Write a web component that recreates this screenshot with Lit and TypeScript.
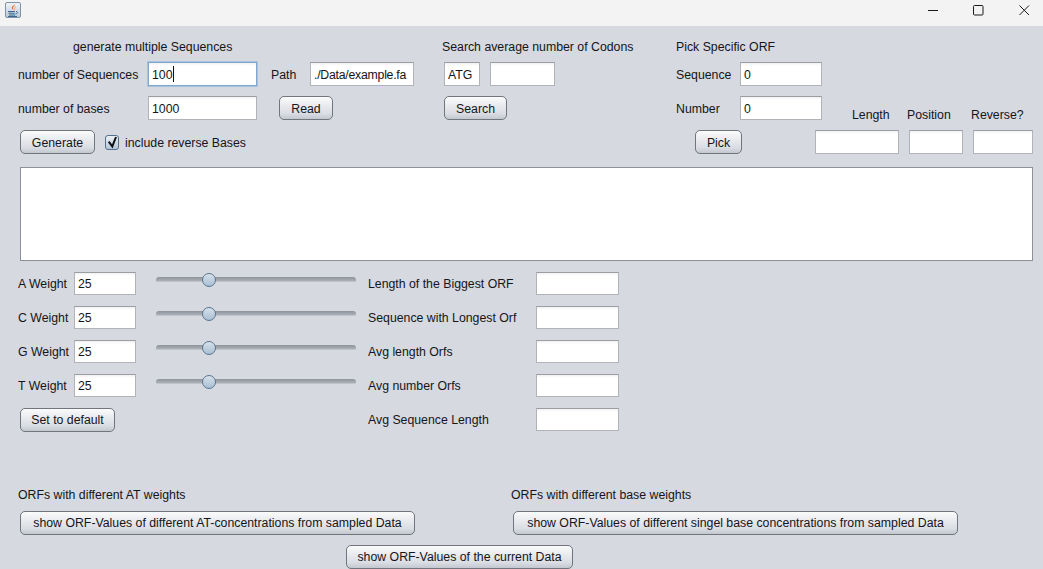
import { LitElement, html, css } from 'lit';
import { customElement, state } from 'lit/decorators.js';

const WEIGHT_MAX = 100;

@customElement('app-root')
export class AppRoot extends LitElement {
  static override styles = css`
    :host {
      display: block;
      height: 100vh;
      overflow: hidden;
      background: #d6d9df;
      color: #15151a;
      font-family: 'Liberation Sans', Arial, sans-serif;
      font-size: 12.3px;
      line-height: 16px;
    }

    * {
      box-sizing: border-box;
    }

    .titlebar {
      display: flex;
      align-items: center;
      height: 26px;
      background: #f3f3f3;
      padding-left: 5px;
    }

    .app-icon {
      display: block;
      margin-bottom: 6px;
    }

    .window-controls {
      display: flex;
      margin-left: auto;
    }

    .window-controls svg {
      display: block;
      width: 46px;
      height: 20px;
      margin-bottom: 6px;
    }

    .top {
      display: flex;
      padding-left: 18px;
    }

    .group {
      display: flex;
      flex-direction: column;
      gap: 10px;
    }

    .group.left {
      width: 396px;
    }

    .group.codons {
      width: 234px;
      margin-left: 28px;
    }

    .group-title {
      height: 36px;
      padding-top: 13px;
      margin-bottom: -10px;
    }

    .group.left .group-title {
      padding-left: 55px;
    }

    .row {
      display: flex;
      align-items: center;
      height: 24px;
    }

    .row label,
    .reverse .label {
      padding-top: 1px;
    }

    label,
    .label {
      display: block;
      flex: none;
    }

    input {
      flex: none;
      display: block;
      height: 24px;
      padding: 1px 3px 0;
      border: 1px solid #b1b3b8;
      border-top-color: #9b9da2;
      background: linear-gradient(#f1f1f2, #fff 3px);
      color: #15151a;
      font: inherit;
      outline: none;
      border-radius: 0;
    }

    .field-wrap {
      position: relative;
      flex: none;
    }

    .field-wrap input {
      border: 1px solid #7fa7d1;
      box-shadow: 0 0 0 1px #a9c3de;
    }

    .caret {
      position: absolute;
      left: 25px;
      top: 4px;
      width: 1px;
      height: 16px;
      background: #111;
    }

    button {
      flex: none;
      height: 24px;
      padding: 1px 0 0;
      border: 1px solid #71757e;
      border-radius: 5px;
      background: linear-gradient(#fbfbfc 0%, #e6e8ec 45%, #dadde3 75%, #c3c7cf 100%);
      color: #15151a;
      font: inherit;
      text-align: center;
    }

    .w-num-label { width: 130px; }
    .w-num { width: 109px; }
    .path-label { width: 39px; margin-left: 14px; }
    .w-path { width: 104px; letter-spacing: -0.25px; }
    .read { width: 54px; margin-left: 22px; }
    .generate { width: 75px; margin-left: 2px; }

    .reverse {
      display: flex;
      align-items: center;
      margin-left: 10px;
      gap: 6px;
    }

    .reverse svg {
      display: block;
    }

    .codons .row {
      padding-left: 2px;
    }

    .w-codon { width: 36px; }
    .w-count { width: 65px; margin-left: 10px; }
    .search { width: 63px; }

    .orf-label { width: 64px; }
    .w-orf { width: 82px; }
    .result-title {
      align-self: flex-end;
      margin-bottom: -3px;
    }
    .t-length { margin-left: 30px; width: 55px; }
    .t-position { width: 64px; }
    .pick { width: 47px; margin-left: 19px; }
    .w-length { width: 84px; margin-left: 73px; }
    .w-position { width: 54px; margin-left: 10px; }
    .w-reverse { width: 60px; margin-left: 10px; }

    .output {
      height: 94px;
      margin: 13px 10px 0 20px;
      border: 1px solid #8d9097;
      background: #fff;
    }

    .weights {
      display: flex;
      flex-direction: column;
      gap: 11px;
      margin-top: 11px;
      padding-left: 18px;
    }

    .weight-row {
      display: flex;
      align-items: center;
      height: 23px;
    }

    .weight-row input {
      height: 23px;
    }

    .w-weight-label { width: 56px; }
    .w-weight { width: 62px; }
    .slider {
      position: relative;
      flex: none;
      width: 200px;
      height: 6px;
      margin: -8px 12px 0 20px;
      border-radius: 3px;
      background: linear-gradient(#8e929a, #a9adb5 60%, #e3e5e9);
    }

    .thumb {
      position: absolute;
      top: -4px;
      width: 14px;
      height: 14px;
      margin-left: -7px;
      border: 1px solid #5a7590;
      border-radius: 50%;
      background: linear-gradient(#d7e1ea, #a9bfd3);
    }

    .stat-label { width: 168px; }
    .w-stat { width: 83px; }

    .default-btn {
      width: 95px;
      margin-left: 2px;
      margin-right: 253px;
    }

    .bottom {
      display: flex;
      margin-top: 56px;
      padding-left: 18px;
    }

    .bottom-col {
      display: flex;
      flex-direction: column;
      gap: 8px;
      width: 493px;
    }

    .bottom-col button {
      align-self: flex-start;
      margin-left: 2px;
      padding-top: 0;
    }

    .w-at { width: 395px; }
    .w-base { width: 445px; }

    .current {
      display: block;
      width: 227px;
      margin: 10px 0 0 346px;
      padding-top: 0;
    }
  `;

  @state()
  private weights = [
    { name: 'A Weight', value: 25, stat: 'Length of the Biggest ORF' },
    { name: 'C Weight', value: 25, stat: 'Sequence with Longest Orf' },
    { name: 'G Weight', value: 25, stat: 'Avg length Orfs' },
    { name: 'T Weight', value: 25, stat: 'Avg number Orfs' },
  ];

  private renderTitlebar() {
    return html`
      <div class="titlebar">
        <svg class="app-icon" width="16" height="16" viewBox="0 0 16 16">
          <defs>
            <linearGradient id="icon-bg" x1="0" y1="0" x2="0" y2="1">
              <stop offset="0" stop-color="#f2f5f8" />
              <stop offset="1" stop-color="#b9c8d8" />
            </linearGradient>
          </defs>
          <rect x="0.5" y="0.5" width="15" height="15" rx="1.5" fill="url(#icon-bg)" stroke="#7f93a8" />
          <path d="M10 2c.6 1.6-2.8 2.6-2 4.8.2.5.4.8.7 1.1-1.7-.7-2.5-2-1.7-3.2C7.7 3.700 9.800 3.300 10 2z" fill="#e8641b" />
          <path d="M10.800 4.800c-1.400.7-1.800 1.500-1 3" fill="none" stroke="#f0a060" stroke-width="1" />
          <path d="M3 9.500h7M3.500 11.200h6M4 13h6" stroke="#3f658c" stroke-width="1" fill="none" />
          <path d="M11 9.500c2.200 0 2.200 2-.6 2.500M3 14.500h9" stroke="#3f658c" stroke-width="1" fill="none" />
        </svg>
        <div class="window-controls">
          <svg viewBox="0 0 46 20" fill="none" stroke="#1a1a1a" stroke-width="1">
            <path d="M23 10.500h10" />
          </svg>
          <svg viewBox="0 0 46 20" fill="none" stroke="#1a1a1a" stroke-width="1">
            <rect x="22.500" y="5.500" width="9.500" height="9.500" rx="1" />
          </svg>
          <svg viewBox="0 0 46 20" fill="none" stroke="#1a1a1a" stroke-width="1">
            <path d="M22.500 5.500l9.500 9.500M32 5.500l-9.500 9.500" />
          </svg>
        </div>
      </div>
    `;
  }

  private renderTop() {
    return html`
      <div class="top">
        <div class="group left">
          <div class="group-title">generate multiple Sequences</div>
          <div class="row">
            <label class="w-num-label">number of Sequences</label>
            <div class="field-wrap">
              <input class="w-num" value="100" readonly />
              <span class="caret"></span>
            </div>
            <label class="path-label">Path</label>
            <input class="w-path" value="./Data/example.fa" readonly />
          </div>
          <div class="row">
            <label class="w-num-label">number of bases</label>
            <input class="w-num" value="1000" readonly />
            <button class="read">Read</button>
          </div>
          <div class="row">
            <button class="generate">Generate</button>
            <div class="reverse">
              <svg width="14" height="15" viewBox="0 0 14 15">
                <defs>
                  <linearGradient id="check-bg" x1="0" y1="0" x2="0" y2="1">
                    <stop offset="0" stop-color="#eef2f6" />
                    <stop offset="1" stop-color="#b4c5d6" />
                  </linearGradient>
                </defs>
                <rect x="0.5" y="0.5" width="13" height="14" rx="2.5" fill="url(#check-bg)" stroke="#54708c" />
                <path d="M3.700 6.700l3.600 4.700L11 2" fill="none" stroke="#0d1116" stroke-width="2" />
              </svg>
              <span class="label">include reverse Bases</span>
            </div>
          </div>
        </div>
        <div class="group codons">
          <div class="group-title">Search average number of Codons</div>
          <div class="row">
            <input class="w-codon" value="ATG" readonly />
            <input class="w-count" readonly />
          </div>
          <div class="row">
            <button class="search">Search</button>
          </div>
        </div>
        <div class="group orf">
          <div class="group-title">Pick Specific ORF</div>
          <div class="row">
            <label class="orf-label">Sequence</label>
            <input class="w-orf" value="0" readonly />
          </div>
          <div class="row">
            <label class="orf-label">Number</label>
            <input class="w-orf" value="0" readonly />
            <span class="label result-title t-length">Length</span>
            <span class="label result-title t-position">Position</span>
            <span class="label result-title">Reverse?</span>
          </div>
          <div class="row">
            <button class="pick">Pick</button>
            <input class="w-length" readonly />
            <input class="w-position" readonly />
            <input class="w-reverse" readonly />
          </div>
        </div>
      </div>
    `;
  }

  private renderWeights() {
    return html`
      <div class="weights">
        ${this.weights.map(
          (w) => html`
            <div class="weight-row">
              <label class="w-weight-label">${w.name}</label>
              <input class="w-weight" value=${w.value} readonly />
              <div class="slider">
                <div class="thumb" style="left: ${(w.value / WEIGHT_MAX) * 100 + 1.5}%"></div>
              </div>
              <label class="stat-label">${w.stat}</label>
              <input class="w-stat" readonly />
            </div>
          `
        )}
        <div class="weight-row">
          <button class="default-btn">Set to default</button>
          <label class="stat-label">Avg Sequence Length</label>
          <input class="w-stat" readonly />
        </div>
      </div>
    `;
  }

  override render() {
    return html`
      ${this.renderTitlebar()} ${this.renderTop()}
      <div class="output"></div>
      ${this.renderWeights()}
      <div class="bottom">
        <div class="bottom-col">
          <span class="label">ORFs with different AT weights</span>
          <button class="w-at">show ORF-Values of different AT-concentrations from sampled Data</button>
        </div>
        <div class="bottom-col">
          <span class="label">ORFs with different base weights</span>
          <button class="w-base">show ORF-Values of different singel base concentrations from sampled Data</button>
        </div>
      </div>
      <button class="current">show ORF-Values of the current Data</button>
    `;
  }
}
